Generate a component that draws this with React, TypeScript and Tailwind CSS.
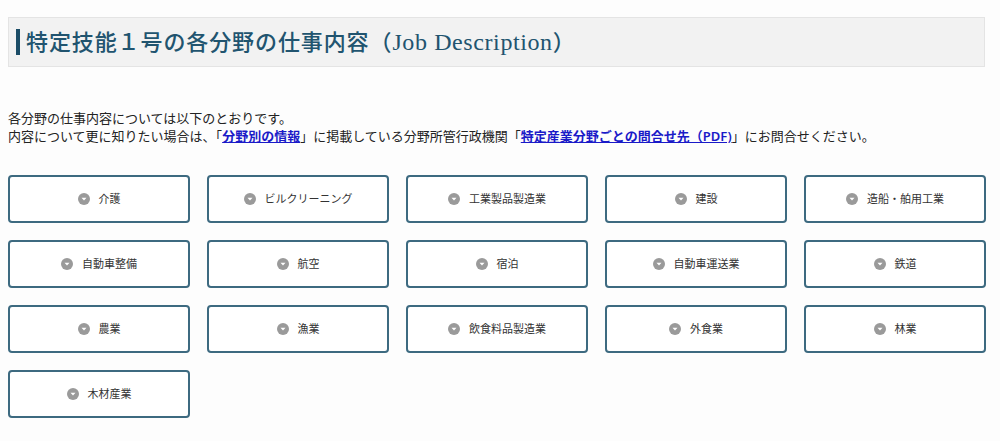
import React from "react";

const items = [
  "介護",
  "ビルクリーニング",
  "工業製品製造業",
  "建設",
  "造船・舶用工業",
  "自動車整備",
  "航空",
  "宿泊",
  "自動車運送業",
  "鉄道",
  "農業",
  "漁業",
  "飲食料品製造業",
  "外食業",
  "林業",
  "木材産業",
];

function Icon() {
  return (
    <svg width="12" height="12" viewBox="0 0 12 12" className="shrink-0">
      <circle cx="6" cy="6" r="6" fill="#9a9a9a" />
      <path d="M3.5 4.7 L8.5 4.7 L6 7.5 Z" fill="#ffffff" />
    </svg>
  );
}

export default function App() {
  return (
    <div
      className="w-[1000px] h-[441px] bg-[#fdfdfd] pt-[17px] pl-[8px] pr-[15px] overflow-hidden"
      style={{ fontFamily: '"Noto Sans", "Noto Sans CJK JP", sans-serif' }}
    >
      <div className="h-[50px] bg-[#f2f2f2] border border-[#e4e4e4] flex items-center pl-[7px]">
        <div className="w-[4px] h-[26px] bg-[#1b4c66] mr-[6px]" />
        <h2
          className="text-[22px] font-medium text-[#21546f] leading-none tracking-[0.9px]"
          style={{ fontFamily: '"Liberation Serif", "Noto Sans CJK JP", serif' }}
        >
          特定技能１号の各分野の仕事内容（<span className="text-[24px] tracking-[0.6px]">Job Description</span>）
        </h2>
      </div>

      <div className="mt-[42px] text-[13px] leading-[18px] text-[#222]">
        <p>各分野の仕事内容については以下のとおりです。</p>
        <p>
          内容について更に知りたい場合は、「
          <a className="text-[#1a1ac8] underline font-semibold">分野別の情報</a>
          」に掲載している分野所管行政機関「
          <a className="text-[#1a1ac8] underline font-semibold">特定産業分野ごとの問合せ先（PDF)</a>
          」にお問合せください。
        </p>
      </div>

      <div className="mt-[30px] grid grid-cols-5 gap-x-[17px] gap-y-[17px] w-[978px]">
        {items.map((t) => (
          <div
            key={t}
            className="h-[48px] bg-white border-2 border-[#3d6a80] rounded-[4px] flex items-center justify-center gap-[9px] text-[11px] text-[#333]"
          >
            <Icon />
            <span>{t}</span>
          </div>
        ))}
      </div>
    </div>
  );
}
